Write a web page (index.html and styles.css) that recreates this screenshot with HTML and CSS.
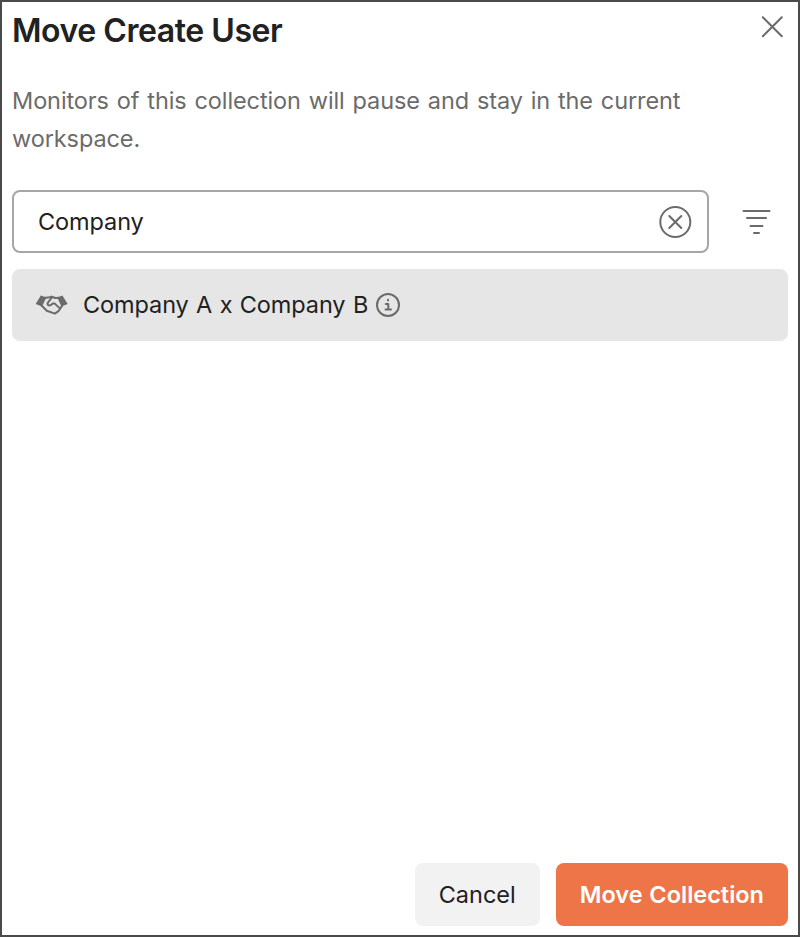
FILE: index.html
```
<!DOCTYPE html>
<html lang="en">
<head>
    <meta charset="UTF-8">
    <meta name="viewport" content="width=device-width, initial-scale=1.0">
    <title>Move Create User</title>
    <link rel="stylesheet" href="styles.css">
</head>
<body>
    <div class="modal">
        <div class="modal-header">
            <h1>Move Create User</h1>
            <button type="button" class="icon-button close-button" aria-label="Close">
                <svg width="24" height="24" viewBox="0 0 24 24"><path d="M2.8 2.3L21.8 21.3M21.8 2.3L2.8 21.3"/></svg>
            </button>
        </div>
        <p class="description">Monitors of this collection will pause and stay in the current workspace.</p>
        <div class="search-row">
            <div class="search-box">
                <input id="search" type="text" value="Company">
                <button type="button" class="icon-button" aria-label="Clear">
                    <svg width="34" height="34" viewBox="0 0 34 34"><circle cx="17.3" cy="17" r="15"/><path d="M11.3 11L23.3 23M23.3 11L11.3 23"/></svg>
                </button>
            </div>
            <button type="button" class="icon-button filter-button" aria-label="Filter">
                <svg width="32" height="32" viewBox="0 0 32 32"><path d="M3.5 5H29.5M7 12H26M10.5 20H22.5M14 27H19"/></svg>
            </button>
        </div>
        <div class="workspace-item">
            <svg class="handshake" width="32" height="22" viewBox="0 0 32 22">
                <path class="cuff" d="M4.8 1.6L10.3 3.4L6 12.4L-.3 10ZM26.4 1.6L21.2 3.4L25.4 12.4L31.7 10Z"/>
                <path d="M8.5 3.8L12.3 3.6L15.6 2.6L19.5 4L23 3.8M5.3 11.2L10.8 16.8L18.8 19.6L22.4 17.2L26.2 11.6M16.2 3L11.6 9.2C11.6 12.2 14.8 12.2 16.8 9.4L18.8 9.6L23.8 14.4"/>
            </svg>
            <span>Company A x Company B</span>
            <svg class="info" width="26" height="26" viewBox="0 0 26 26"><circle cx="13" cy="13" r="11"/><path d="M10.8 12H13.3V17.5M10.5 17.5H16"/><path d="M13 7.8V8.4"/></svg>
        </div>
        <div class="modal-footer">
            <button type="button" class="button">Cancel</button>
            <button type="button" class="button button-primary">Move Collection</button>
        </div>
    </div>
</body>
</html>
```

FILE: styles.css
```
* {
    box-sizing: border-box;
}
body {
    font-family: Inter, "Liberation Sans", sans-serif;
    font-size: 23.5px;
    letter-spacing: -0.1px;
    color: #212121;
    margin: 0;
}
.modal {
    display: flex;
    flex-direction: column;
    height: 100vh;
    padding: 9px 10px 9px;
    border: 2px solid #4a4a4a;
    background-color: #fff;
}
.modal-header {
    display: flex;
    justify-content: space-between;
    align-items: flex-start;
}
.modal-header h1 {
    font-size: 32px;
    font-weight: 600;
    line-height: 40px;
    letter-spacing: -0.45px;
    margin: 0;
}
.icon-button {
    display: flex;
    padding: 0;
    border: none;
    background: none;
    cursor: pointer;
}
svg {
    flex: none;
    fill: none;
    stroke: #6b6b6b;
    stroke-width: 2;
    stroke-linecap: round;
    stroke-linejoin: round;
}
.close-button {
    margin: 4px 4px 0 0;
}
.description {
    margin: 31px 0 32px;
    line-height: 38px;
    word-spacing: 1.4px;
    color: #6b6b6b;
}
.search-row {
    display: flex;
    align-items: center;
}
.search-box {
    display: flex;
    align-items: center;
    width: 697px;
    height: 63px;
    padding: 0 15px 0 24px;
    border: 2px solid #a6a6a6;
    border-radius: 8px;
}
.search-box input {
    flex: 1;
    padding: 0;
    border: none;
    outline: none;
    font: inherit;
    letter-spacing: inherit;
    color: inherit;
}
.filter-button {
    margin-left: 31px;
}
.workspace-item {
    display: flex;
    align-items: center;
    height: 72px;
    margin-top: 16px;
    padding: 0 24px 1px;
    border-radius: 8px;
    background-color: #e6e6e6;
    word-spacing: 0.9px;
}
.handshake {
    margin-right: 15px;
    overflow: visible;
}
.info {
    margin-left: 7px;
}
.handshake .cuff {
    fill: #6b6b6b;
    stroke: none;
}
.modal-footer {
    display: flex;
    justify-content: flex-end;
    gap: 16px;
    margin-top: auto;
}
.button {
    height: 63px;
    padding: 0 24px;
    border: none;
    border-radius: 8px;
    background-color: #f2f2f2;
    font: inherit;
    letter-spacing: 0;
    color: #212121;
    cursor: pointer;
}
.button-primary {
    background-color: #ed7547;
    color: #fff;
    font-weight: 600;
    word-spacing: 0.9px;
}
```
